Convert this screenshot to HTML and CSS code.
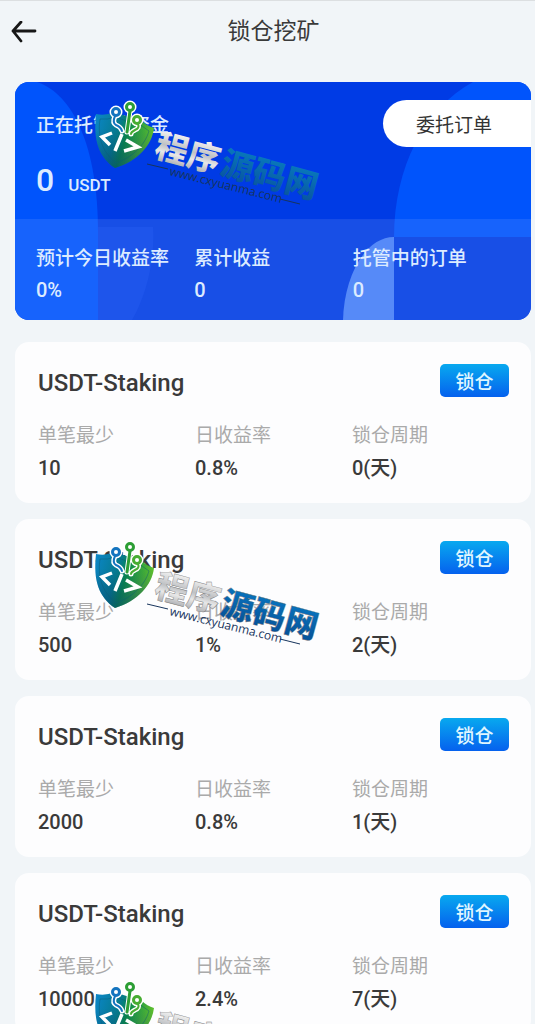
FILE: index.html
```html
<!DOCTYPE html>
<html lang="zh-CN">
<head>
<meta charset="utf-8">
<meta name="viewport" content="width=device-width, initial-scale=1">
<title>锁仓挖矿</title>
<link rel="stylesheet" href="styles.css">
</head>
<body>
<svg class="defs" width="0" height="0" aria-hidden="true">
  <defs>
    <linearGradient id="shield" x1="0" y1="0" x2="1" y2="0.3">
      <stop offset="0" stop-color="#0b86cb"/><stop offset="0.45" stop-color="#067a8c"/><stop offset="0.6" stop-color="#0a8a4c"/><stop offset="1" stop-color="#5fc02c"/>
    </linearGradient>
    <linearGradient id="shade" x1="0" y1="0" x2="0" y2="1">
      <stop offset="0.3" stop-color="#053a70" stop-opacity="0"/><stop offset="1" stop-color="#053a70" stop-opacity="0.5"/>
    </linearGradient>
    <linearGradient id="silver" x1="0" y1="0" x2="0" y2="1">
      <stop offset="0.2" stop-color="#f4f4f4"/><stop offset="0.5" stop-color="#bfc1c4"/><stop offset="0.65" stop-color="#e8e8e8"/><stop offset="0.9" stop-color="#a4a6aa"/>
    </linearGradient>
    <linearGradient id="teal" x1="0" y1="0" x2="0" y2="1">
      <stop offset="0.2" stop-color="#0878bb"/><stop offset="1" stop-color="#084f9b"/>
    </linearGradient>
    <linearGradient id="ocean" x1="0" y1="0" x2="0" y2="1">
      <stop offset="0.2" stop-color="#0872bd"/><stop offset="1" stop-color="#064b91"/>
    </linearGradient>
    <symbol id="emblem" viewBox="0 0 245 120" overflow="visible">
      <path d="M11 19 Q21 21 29 17 L57 26 Q62 31 69 33 C67 50 53 66 30 73 C14 62 8 46 11 19Z" fill="url(#shield)"/>
      <path d="M11 19 Q21 21 29 17 L57 26 Q62 31 69 33 C67 50 53 66 30 73 C14 62 8 46 11 19Z" fill="url(#shade)"/>
      <path d="M15 24 Q23 25 30 22 L57 31 L64 36 C60 50 48 62 31 68 C19 58 12 45 15 24Z" fill="none" stroke="#0a5c75" stroke-opacity="0.45"/>
      <g fill="none" stroke="#fff" stroke-linecap="round" stroke-linejoin="round">
        <g stroke-width="5">
          <path d="M30 21 Q27 28 31 30 Q36 32 37 36 M45 16 L42 37 M53 29 Q55 33 50 35 Q46 37 46 39"/>
          <circle cx="31" cy="17" r="4"/><circle cx="45" cy="12" r="4"/><circle cx="52" cy="25" r="4"/>
        </g>
        <path stroke="#1474bf" stroke-width="2" d="M30 21 Q27 28 31 30 Q36 32 37 36"/>
        <path stroke="#2c9e35" stroke-width="3" d="M45 16 L42 37"/>
        <path stroke="#47ad32" stroke-width="2" d="M53 29 Q55 33 50 35 Q46 37 46 39"/>
        <g stroke-width="3" fill="#fff">
          <circle stroke="#1474bf" cx="31" cy="17" r="3.5"/><circle stroke="#2c9e35" cx="45" cy="12" r="3.5"/><circle stroke="#47ad32" cx="52" cy="25" r="3.5"/>
        </g>
      </g>
      <path d="M27 38 L17 42 L25 50 M37 39 L30 56 M41 45 L53 52 L39 56" fill="none" stroke="#fff" stroke-width="3.5"/>
      <path d="M62 69 L83 74 M195 104 L215 109" stroke="#17345c"/>
      <text class="emblem-url" transform="translate(84 80) rotate(14)">www.cxyuanma.com</text>
    </symbol>
  </defs>
</svg>

<div class="page">
  <header class="topbar">
    <button class="back" type="button" aria-label="返回">
      <svg width="26" height="22" viewBox="0 0 26 22" fill="none" stroke="#171717" stroke-width="2.8" stroke-linecap="round" stroke-linejoin="round" aria-hidden="true"><path d="M24 10H2M10 1L2 10l8 10"/></svg>
    </button>
    <h1>锁仓挖矿</h1>
  </header>

  <main>
    <section class="summary">
      <svg class="summary-art" viewBox="0 0 516 238" preserveAspectRatio="none" aria-hidden="true">
        <rect width="516" height="238" fill="#003be5"/>
        <path d="M0 0H22C58 12 83 65 83 150V238H0Z" fill="#0054fc"/>
        <path d="M516 0H458C410 26 379 85 379 155H516Z" fill="#0054fc"/>
        <rect y="137" width="516" height="101" fill="#fff" fill-opacity="0.09"/>
        <path d="M83 138H379V155H516V238H83Z" fill="#184fe6"/>
        <path d="M83 145H138C140 175 133 210 117 238H83Z" fill="#1e55eb"/>
        <path d="M379 155C350 155 329 195 328 238H379Z" fill="#568af8"/>
      </svg>
      <div class="summary-head">
        <div>
          <p class="summary-label">正在托管的资金</p>
          <p class="balance"><strong>0</strong><span>USDT</span></p>
        </div>
        <button class="orders" type="button">委托订单</button>
      </div>
      <dl class="stats">
        <div><dt>预计今日收益率</dt><dd>0%</dd></div>
        <div><dt>累计收益</dt><dd>0</dd></div>
        <div><dt>托管中的订单</dt><dd>0</dd></div>
      </dl>
    </section>

    <section class="plan">
      <div class="plan-head"><h2>USDT-Staking</h2><button class="lock" type="button">锁仓</button></div>
      <dl class="terms">
        <div><dt>单笔最少</dt><dd>10</dd></div>
        <div><dt>日收益率</dt><dd>0.8%</dd></div>
        <div><dt>锁仓周期</dt><dd>0(天)</dd></div>
      </dl>
    </section>
    <section class="plan">
      <div class="plan-head"><h2>USDT-Staking</h2><button class="lock" type="button">锁仓</button></div>
      <dl class="terms">
        <div><dt>单笔最少</dt><dd>500</dd></div>
        <div><dt>日收益率</dt><dd>1%</dd></div>
        <div><dt>锁仓周期</dt><dd>2(天)</dd></div>
      </dl>
    </section>
    <section class="plan">
      <div class="plan-head"><h2>USDT-Staking</h2><button class="lock" type="button">锁仓</button></div>
      <dl class="terms">
        <div><dt>单笔最少</dt><dd>2000</dd></div>
        <div><dt>日收益率</dt><dd>0.8%</dd></div>
        <div><dt>锁仓周期</dt><dd>1(天)</dd></div>
      </dl>
    </section>
    <section class="plan">
      <div class="plan-head"><h2>USDT-Staking</h2><button class="lock" type="button">锁仓</button></div>
      <dl class="terms">
        <div><dt>单笔最少</dt><dd>10000</dd></div>
        <div><dt>日收益率</dt><dd>2.4%</dd></div>
        <div><dt>锁仓周期</dt><dd>7(天)</dd></div>
      </dl>
    </section>
  </main>

  <div class="watermarks" aria-hidden="true">
    <svg viewBox="0 0 245 120"><use href="#emblem"/><g class="emblem-name" transform="translate(68 61) rotate(15)"><text fill="url(#silver)">程序</text><text x="68" fill="url(#teal)">源码网</text></g></svg>
    <svg viewBox="0 0 245 120"><use href="#emblem"/><g class="emblem-name outlined" transform="translate(68 61) rotate(15)"><text fill="url(#silver)">程序</text><text x="68" fill="url(#ocean)">源码网</text></g></svg>
    <svg viewBox="0 0 245 120"><use href="#emblem"/><g class="emblem-name outlined" transform="translate(68 61) rotate(15)"><text fill="url(#silver)">程序</text><text x="68" fill="url(#ocean)">源码网</text></g></svg>
  </div>
</div>
</body>
</html>
```

FILE: styles.css
```css
* {
  box-sizing: border-box;
}

body,
h1,
h2,
p,
dl,
dd {
  margin: 0;
}

body {
  background: #f1f5f8;
  color: #3a3a3a;
  font-family: Roboto, "Noto Sans CJK SC", sans-serif;
}

button {
  border: 0;
  padding: 0;
  font-family: inherit;
  cursor: pointer;
}

.defs {
  position: absolute;
}

.page {
  position: relative;
  height: 100vh;
  overflow: hidden;
  border-top: 1px solid #dcdfe1;
}

.topbar {
  display: grid;
  grid-template-columns: 48px 1fr 36px;
  align-items: center;
  height: 62px;
}

.back {
  display: flex;
  padding-left: 11px;
  background: none;
}

.topbar h1 {
  font-size: 23px;
  font-weight: 400;
  line-height: 32px;
  text-align: center;
}

main {
  display: flex;
  flex-direction: column;
  gap: 16px;
  padding: 19px 4px 0 15px;
}

.summary {
  position: relative;
  margin-bottom: 6px;
  border-radius: 14px;
  overflow: hidden;
  color: #dcebff;
}

.summary-art {
  position: absolute;
  width: 100%;
  height: 100%;
}

.summary-head {
  position: relative;
  display: flex;
  justify-content: space-between;
  align-items: flex-start;
  height: 137px;
  padding: 18px 0 0 21px;
}

.summary-label {
  padding-top: 12px;
  font-size: 19px;
  font-weight: 500;
  line-height: 28px;
}

.balance {
  display: flex;
  align-items: baseline;
  gap: 14px;
  padding-top: 18px;
  line-height: 44px;
}

.balance strong {
  font-size: 32px;
  font-weight: 500;
}

.balance span {
  font-size: 17px;
  font-weight: 500;
}

.orders {
  width: 148px;
  height: 47px;
  padding-right: 6px;
  border-radius: 24px 0 0 24px;
  background: #fff;
  color: #333;
  font-size: 19px;
}

.stats,
.terms {
  position: relative;
  display: grid;
  grid-template-columns: repeat(3, 1fr);
}

.stats {
  height: 101px;
  padding: 25px 20px 0 21px;
  font-size: 19px;
  font-weight: 500;
  line-height: 30px;
}

.stats dt {
  white-space: nowrap;
}

.stats dd {
  font-size: 20px;
  line-height: 32px;
}

.plan {
  height: 161px;
  padding: 22px 22px 0 23px;
  border-radius: 14px;
  background: #fdfdfe;
}

.plan-head {
  display: flex;
  justify-content: space-between;
  align-items: flex-start;
}

.plan h2 {
  font-size: 24px;
  font-weight: 500;
  line-height: 38px;
}

.lock {
  width: 69px;
  height: 33px;
  border-radius: 5px;
  background: linear-gradient(#08a9ef, #0561ee);
  color: #dff6ff;
  font-size: 19px;
  font-weight: 500;
}

.terms {
  padding-top: 18px;
}

.terms dt {
  color: #aaa;
  font-size: 19px;
  line-height: 32px;
}

.terms dd {
  font-size: 20px;
  font-weight: 500;
  line-height: 32px;
}

.watermarks {
  position: absolute;
  top: 94px;
  left: 85px;
  display: flex;
  flex-direction: column;
  gap: 320px;
  pointer-events: none;
}

.watermarks svg {
  width: 245px;
  height: 120px;
  overflow: visible;
}

.emblem-name {
  font-size: 33px;
  font-weight: 900;
  font-family: "Noto Sans CJK SC", sans-serif;
}

.outlined {
  stroke: #777;
  stroke-width: 0.4px;
}

.emblem-url {
  fill: #17345c;
  stroke: none;
  font-family: "Open Sans", sans-serif;
  font-size: 12px;
  font-weight: 400;
}
```
